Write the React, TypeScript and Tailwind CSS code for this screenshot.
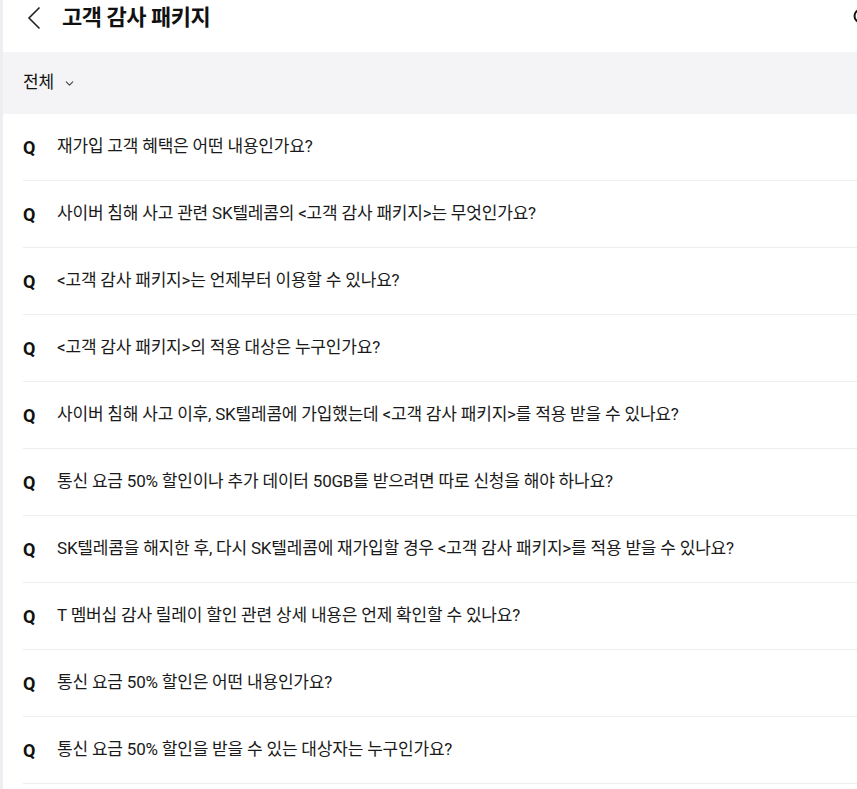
import { ChevronDown } from "lucide-react";

const questions = [
  "재가입 고객 혜택은 어떤 내용인가요?",
  "사이버 침해 사고 관련 SK텔레콤의 <고객 감사 패키지>는 무엇인가요?",
  "<고객 감사 패키지>는 언제부터 이용할 수 있나요?",
  "<고객 감사 패키지>의 적용 대상은 누구인가요?",
  "사이버 침해 사고 이후, SK텔레콤에 가입했는데 <고객 감사 패키지>를 적용 받을 수 있나요?",
  "통신 요금 50% 할인이나 추가 데이터 50GB를 받으려면 따로 신청을 해야 하나요?",
  "SK텔레콤을 해지한 후, 다시 SK텔레콤에 재가입할 경우 <고객 감사 패키지>를 적용 받을 수 있나요?",
  "T 멤버십 감사 릴레이 할인 관련 상세 내용은 언제 확인할 수 있나요?",
  "통신 요금 50% 할인은 어떤 내용인가요?",
  "통신 요금 50% 할인을 받을 수 있는 대상자는 누구인가요?",
];

const App = () => {
  return (
    <div className="flex min-h-screen bg-white font-['Roboto','Noto_Sans_CJK_KR',sans-serif] text-[#222]">
      <div className="w-[3px] shrink-0 bg-[#eceef1]" />
      <main className="flex-1 flex flex-col overflow-hidden">
        <header className="relative h-[52px] flex items-start pt-[5px] pl-[24px]">
          <svg width="14" height="24" viewBox="0 0 14 24" className="mt-[1px]" fill="none">
            <path d="M12.5 1.5 L2 12 L12.5 22.5" stroke="#222" strokeWidth="1.6" />
          </svg>
          <h1 className="ml-[21px] text-[22px] leading-[26px] font-bold tracking-[-0.5px] text-[#111]">
            고객 감사 패키지
          </h1>
          <svg width="20" height="20" viewBox="0 0 20 20" className="absolute right-[-15px] top-[7px]" fill="none">
            <circle cx="9" cy="9" r="6.5" stroke="#111" strokeWidth="2" />
          </svg>
        </header>

        <div className="h-[62px] bg-[#f4f4f6] flex items-center pl-[20px]">
          <span className="text-[17px] tracking-[-0.2px] text-[#111]">전체</span>
          <ChevronDown className="ml-[9px] mt-[1px] text-[#444]" size={13} strokeWidth={2} />
        </div>

        <ul className="flex flex-col">
          {questions.map((q) => (
            <li key={q} className="ml-[20px] h-[67px] border-b border-[#eeeeee] flex items-center">
              <span className="w-[34px] text-[18px] font-bold text-[#111]">Q</span>
              <span className="text-[17px] tracking-[-0.2px] text-[#1a1a1a]">{q}</span>
            </li>
          ))}
        </ul>
      </main>
    </div>
  );
};

export default App;
